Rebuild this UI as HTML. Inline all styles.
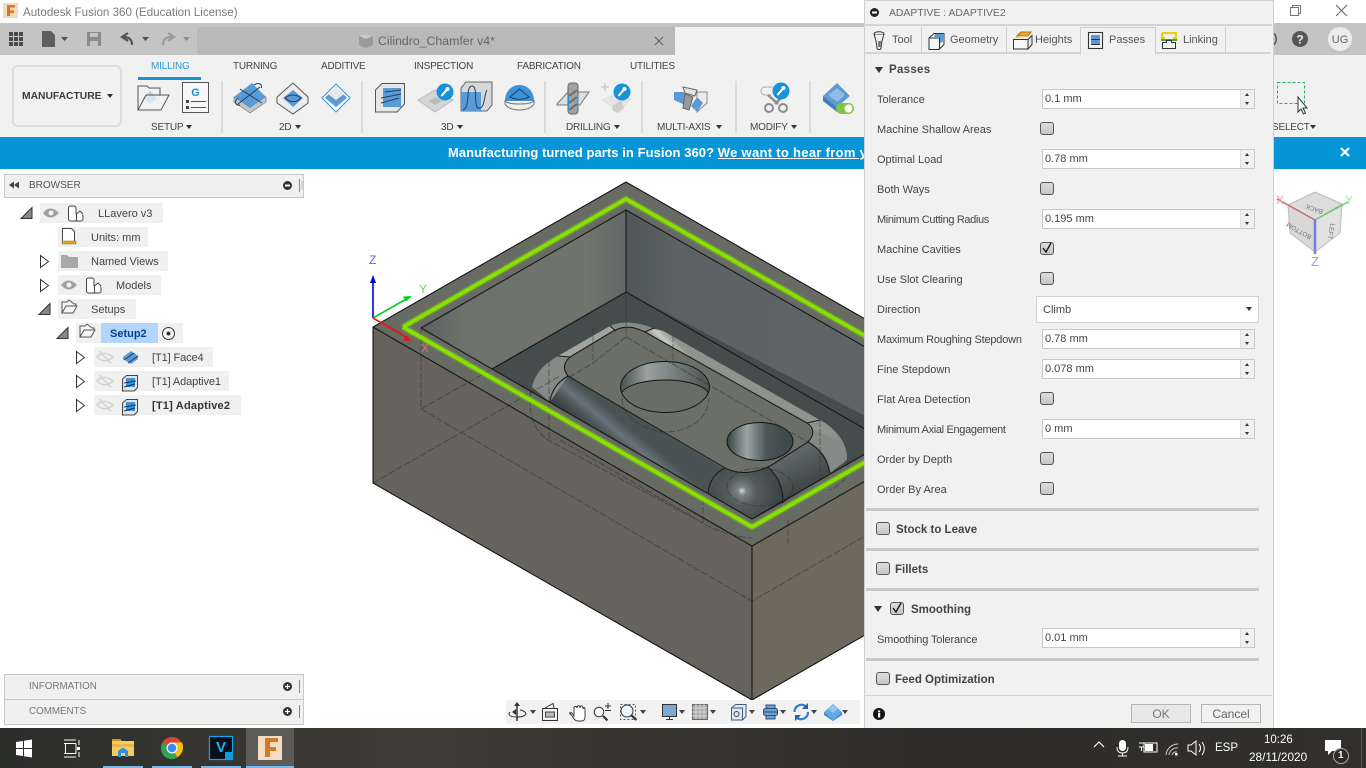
<!DOCTYPE html>
<html><head><meta charset="utf-8"><style>
html,body{margin:0;padding:0;width:1366px;height:768px;overflow:hidden;background:#fff;font-family:"Liberation Sans",sans-serif;color:#444;font-size:11px}
.a{position:absolute}
.t{position:absolute;white-space:nowrap;line-height:14px;height:14px}
.u{font-size:10px;letter-spacing:-.2px}
.r{position:absolute;background:#f0f0f0;height:20px}
.l{position:absolute;left:877px;white-space:nowrap;line-height:14px;color:#444}
.in{position:absolute;left:1042px;width:211px;height:18px;background:#fff;border:1px solid #c9c9c9;line-height:19px;text-indent:2px;color:#444}
.sp{position:absolute;right:0;top:0;width:13px;height:18px;background:#f0f0f0;border-left:1px solid #ddd}
.sp:before{content:"";position:absolute;left:4px;top:3px;border:2.5px solid transparent;border-bottom:3px solid #333;border-top:0}
.sp:after{content:"";position:absolute;left:4px;top:12px;border:2.5px solid transparent;border-top:3px solid #333;border-bottom:0}
.cb{position:absolute;width:12px;height:11px;border:1px solid #555;border-radius:3px;background:linear-gradient(#dcdcdc,#c6c6c6)}
.sec{position:absolute;left:866px;width:393px;height:3px;background:#c8c8c8}
.b{font-weight:bold;color:#444}
.ar{position:absolute;border:3px solid transparent;border-top:4px solid #333;border-bottom:0}
svg{position:absolute;overflow:visible}
</style></head><body>

<!-- title bar -->
<svg style="left:2px;top:2px" width="18" height="18"><rect x="1" y="1" width="15" height="15" fill="#f5d9bd"/><path d="M5 3h8v2.500H8v3h4V11H8v3H5z" fill="#d9762b"/></svg>
<div class="t" style="left:23px;top:6px;font-size:11.600px;color:#7a7a7a">Autodesk Fusion 360 (Education License)</div>
<svg style="left:1289px;top:4px" width="14" height="14"><path d="M1.500 3.500h8v8h-8zM3.500 3.500v-2h8v8h-2" fill="none" stroke="#777"/></svg>
<svg style="left:1335px;top:4px" width="14" height="14"><path d="M1 1l11 11M12 1L1 12" stroke="#666" fill="none"/></svg>

<!-- app toolbar -->
<div class="a" style="left:0;top:23px;width:1366px;height:32px;background:#c4c4c4"></div>
<div class="a" style="left:197px;top:27px;width:478px;height:28px;background:#b9b9b9;border-radius:3px 0 0 0"></div>
<div class="a" style="left:675px;top:27px;width:400px;height:28px;background:#f1f1f1"></div>
<svg style="left:0;top:23px" width="230" height="32">
<g fill="#4a4a4a"><path d="M9 9h4v4H9zM14 9h4v4h-4zM19 9h4v4h-4zM9 14h4v4H9zM14 14h4v4h-4zM19 14h4v4h-4zM9 19h4v4H9zM14 19h4v4h-4zM19 19h4v4h-4z"/></g>
<path d="M42 8h9l4 4v12H42z" fill="#5e5e5e"/><path d="M61 14h7l-3.500 4z" fill="#4f4f4f"/>
<path d="M87 9h14v14H87z" fill="#8a8a8a"/><rect x="90" y="10" width="8" height="4" fill="#c4c4c4"/><rect x="90" y="18" width="8" height="5" fill="#c4c4c4"/>
<path d="M132 22c0-6-3-8-9-8M128 10l-6 4 6 4" fill="none" stroke="#555" stroke-width="2.200"/><path d="M142 14h7l-3.500 4z" fill="#4f4f4f"/>
<path d="M163 22c0-6 3-8 9-8M168 10l6 4-6 4" fill="none" stroke="#9b9b9b" stroke-width="2.200"/><path d="M183 14h7l-3.500 4z" fill="#8e8e8e"/>
</svg>
<svg style="left:358px;top:33px" width="16" height="16"><path d="M1 3l7-2 7 2v9l-7 3-7-3z" fill="#9a9a9a"/><path d="M1 3l7 3 7-3-7-2z" fill="#c9c9c9"/></svg>
<div class="t" style="left:378px;top:34px;font-size:12.300px;color:#666">Cilindro_Chamfer v4*</div>
<svg style="left:654px;top:36px" width="12" height="12"><path d="M1 1l8 8M9 1l-8 8" stroke="#666" fill="none" stroke-width="1.200"/></svg>
<svg style="left:1265px;top:27px" width="101" height="26">
<path d="M8.500 6a8 8 0 0 1 0 12" fill="none" stroke="#555" stroke-width="1.500"/>
<circle cx="35" cy="12" r="8" fill="#555"/><text x="35" y="16.500" text-anchor="middle" font-family="Liberation Sans" font-size="12" font-weight="bold" fill="#eee">?</text>
<circle cx="75" cy="12" r="12" fill="#ececec"/><text x="75" y="16" text-anchor="middle" font-family="Liberation Sans" font-size="11" fill="#666">UG</text>
</svg>

<!-- ribbon -->
<div class="a" style="left:0;top:55px;width:1366px;height:82px;background:#f1f1f1"></div>
<div class="a" style="left:12px;top:65px;width:106px;height:58px;border:2px solid #dcdcdc;border-radius:6px"></div>
<div class="t b" style="left:22px;top:90px;font-size:10.300px;color:#3c3c3c">MANUFACTURE</div>
<div class="ar" style="left:107px;top:94px"></div>
<div class="t u" style="left:151px;top:60px;color:#2b9ad8">MILLING</div>
<div class="a" style="left:138px;top:77px;width:63px;height:3px;background:#1a93d6"></div>
<div class="t u" style="left:233px;top:60px">TURNING</div>
<div class="t u" style="left:321px;top:60px">ADDITIVE</div>
<div class="t u" style="left:414px;top:60px">INSPECTION</div>
<div class="t u" style="left:517px;top:60px">FABRICATION</div>
<div class="t u" style="left:630px;top:60px">UTILITIES</div>
<div class="t u" style="left:151px;top:121px">SETUP</div><div class="ar" style="left:186px;top:125px"></div>
<div class="t u" style="left:279px;top:121px">2D</div><div class="ar" style="left:295px;top:125px"></div>
<div class="t u" style="left:441px;top:121px">3D</div><div class="ar" style="left:457px;top:125px"></div>
<div class="t u" style="left:566px;top:121px">DRILLING</div><div class="ar" style="left:614px;top:125px"></div>
<div class="t u" style="left:657px;top:121px">MULTI-AXIS</div><div class="ar" style="left:716px;top:125px"></div>
<div class="t u" style="left:750px;top:121px">MODIFY</div><div class="ar" style="left:791px;top:125px"></div>
<div class="t u" style="left:1272px;top:121px">SELECT</div><div class="ar" style="left:1310px;top:125px"></div>

<svg style="left:0;top:0" width="1366" height="137">
<g fill="#dadada"><rect x="221" y="81" width="2" height="52"/><rect x="361" y="81" width="2" height="52"/><rect x="544" y="81" width="2" height="52"/><rect x="641" y="81" width="2" height="52"/><rect x="735" y="81" width="2" height="52"/><rect x="809" y="81" width="2" height="52"/></g>
<!-- setup -->
<path d="M138 110V86h9l2 2h11v8" fill="none" stroke="#555"/><path d="M143 98l7-7 7 7-7 6z" fill="#b7d6ee"/><path d="M138 110l8-15h23l-8 15z" fill="#f4f4f4" fill-opacity=".5" stroke="#555"/>
<rect x="182.500" y="82.500" width="26" height="30" fill="#f7f7f7" stroke="#555"/><text x="195.500" y="96" text-anchor="middle" font-family="Liberation Sans" font-weight="bold" font-size="11" fill="#1c8fd8">G</text><path d="M186 100h3v3h-3zM186 106h3v3h-3z" fill="#444"/><path d="M191 101.500h15M191 107.500h15" stroke="#555"/>
<!-- 2d -->
<path d="M234 97v5l16 11 16-11v-5z" fill="#c4c4c4" stroke="#777" stroke-width=".7"/><path d="M234 97l18-14 14 14-16 11z" fill="#5b9bd5"/><path d="M238 104l22-17M240 89l22 14M238 98c-4 3-3 8 2 7M254 85c4-3 9-1 7 3" fill="none" stroke="#1d3f63"/>
<path d="M277 97l16-14 15 14v6l-15 11-16-11z" fill="#ececec" stroke="#555"/><path d="M283 98l10-8 10 8-10 9z" fill="#5b9bd5"/><path d="M285 98c5-4 11-4 16 0-5 5-11 5-16 0z" fill="none" stroke="#1d3f63"/>
<path d="M322 98l14-14 14 14-14 14z" fill="#fff" stroke="#2f95e0"/><path d="M325 98l11-11 11 11-11 9z" fill="#5b9bd5"/><path d="M328 94l8-7 8 7-8 6z" fill="#e7e7e7"/>
<!-- 3d -->
<path d="M375.500 90L382 83.500H404.500V104L397 112H375.500z" fill="#e6e6e6" stroke="#555"/><rect x="383" y="88" width="18" height="19" fill="#5b9bd5"/><path d="M381 98l20-4M381 103l18-5M385 92l16-2" stroke="#1d3f63" fill="none"/>
<path d="M418 100l17-10 18 10-18 12z" fill="#d6d6d6" stroke="#bbb"/><path d="M429 101l6-4 7 4-7 4z" fill="#bbb"/><circle cx="445" cy="92" r="8.500" fill="#1a93d6"/><path d="M441.500 96l5-6" stroke="#fff" stroke-width="2"/><circle cx="447.500" cy="89" r="2" fill="#fff"/>
<path d="M461 88l5-6h26v23l-5 6h-26z" fill="#d8d8d8" stroke="#666"/><path d="M461 92h20v19h-20z" fill="#5b9bd5"/><path d="M463 110c8-3 2-24 9-24s0 24 8 22c5-1 4-14 7-18" fill="none" stroke="#1d3f63"/>
<path d="M505 101c0-9 6-16 14.500-16S534 92 534 101z" fill="#3d93d6"/><path d="M505 101c4 4 25 4 29 0v3c-4 8-25 8-29 0z" fill="#efefef" stroke="#777"/><path d="M510 97l9.500-8 9.500 8c-6 3-13 3-19 0z" fill="none" stroke="#1d3f63"/>
<!-- drilling -->
<path d="M557 104l11-12h21l-9 13H557z" fill="#dedede" stroke="#777"/><rect x="568" y="83" width="10" height="31" rx="3" fill="#a2a2a2" stroke="#666"/><path d="M569 96l8-6M569 103l8-6M569 110l8-6" stroke="#6d6d6d" stroke-width="2"/><path d="M568.500 96v11M578 96v11" stroke="#1a93d6"/>
<path d="M601 87h8M605 83v8" stroke="#ccc" stroke-width="1.500"/><path d="M602 100l14-6 15 5-12 11z" fill="#e5e5e5" stroke="#ddd"/><path d="M612 106l9-6 3 8-6 5-5-2z" fill="#cfcfcf"/><circle cx="622" cy="92" r="8.500" fill="#1a93d6"/><path d="M618.500 96l5-6" stroke="#fff" stroke-width="2"/><circle cx="624.500" cy="89" r="2" fill="#fff"/>
<!-- multi-axis -->
<path d="M697 92h10v11l-10 9z" fill="#ececec" stroke="#888"/><path d="M674 92h10l5 15-15-7zM691 106l6-9 6 6-6 9z" fill="#5b9bd5"/><path d="M683 87l14 3-2 6-10-3z" fill="#e2e2e2" stroke="#666"/><path d="M685 94l8 3-4 13-6-2z" fill="#9a9a9a" stroke="#666"/>
<!-- modify -->
<path d="M773 87h-8a4 4 0 0 0 0 8h6" stroke="#aaa" fill="none"/><path d="M768 95l10 9M784 95l-9 9" stroke="#8c8c8c" stroke-width="2.500"/><circle cx="769" cy="108" r="4" fill="none" stroke="#8c8c8c" stroke-width="2"/><circle cx="783" cy="108" r="4" fill="none" stroke="#8c8c8c" stroke-width="2"/><circle cx="781" cy="91" r="8.500" fill="#1a93d6"/><path d="M777.500 95l5-6" stroke="#fff" stroke-width="2"/><circle cx="783.500" cy="88" r="2" fill="#fff"/>
<!-- simulation -->
<path d="M823 96l14-13 13 13-13 11z" fill="#5b9bd5"/><path d="M823 96v5l14 11 6-4v-4l-6 3z" fill="#3d7fbd"/><path d="M828 95l9-7 8 7-8 7z" fill="#8fbde6"/>
<rect x="836" y="103" width="18" height="11" rx="5.500" fill="#84c443"/><circle cx="848.500" cy="108.500" r="4" fill="#fff"/>
<!-- select -->
<rect x="1277.500" y="82.500" width="27" height="21" fill="none" stroke="#27ae60" stroke-dasharray="3 2"/>
<path d="M1298 97v15l3-3 2.500 5 2-1-2.500-5h4z" fill="#fff" stroke="#333"/>
</svg>

<!-- banner -->
<div class="a" style="left:0;top:137px;width:1366px;height:32px;background:#0696d7"></div>
<div class="t b" style="left:448px;top:146px;color:#fff;font-size:13px;letter-spacing:.06px;width:416px;overflow:hidden;height:16px">Manufacturing turned parts in Fusion 360? <u style="letter-spacing:.3px">We want to hear from you</u></div>
<svg style="left:1340px;top:147px" width="12" height="12"><path d="M1 1l8 8M9 1l-8 8" stroke="#fff" stroke-width="2.200" fill="none"/></svg>

<!-- 3D model -->
<svg style="left:0;top:0" width="1366" height="768">
<defs>
<linearGradient id="wl" x1="421" y1="0" x2="626" y2="0" gradientUnits="userSpaceOnUse"><stop offset="0" stop-color="#596160"/><stop offset=".2" stop-color="#6d716b"/><stop offset=".8" stop-color="#71746d"/><stop offset="1" stop-color="#636867"/></linearGradient>
<linearGradient id="wr" x1="626" y1="0" x2="864" y2="0" gradientUnits="userSpaceOnUse"><stop offset="0" stop-color="#4e5758"/><stop offset=".2" stop-color="#5a6264"/><stop offset="1" stop-color="#5d6566"/></linearGradient>
<linearGradient id="bd" x1="570" y1="378" x2="550" y2="402" gradientUnits="userSpaceOnUse"><stop offset="0" stop-color="#4a5354"/><stop offset=".35" stop-color="#66747a"/><stop offset=".65" stop-color="#4a5354"/><stop offset="1" stop-color="#353c3c"/></linearGradient>
<linearGradient id="br" x1="790" y1="452" x2="810" y2="490" gradientUnits="userSpaceOnUse"><stop offset="0" stop-color="#606a6a"/><stop offset=".6" stop-color="#4a5252"/><stop offset="1" stop-color="#3b4241"/></linearGradient>
<linearGradient id="tr" x1="665" y1="328" x2="652" y2="340" gradientUnits="userSpaceOnUse"><stop offset="0" stop-color="#8f938e"/><stop offset=".5" stop-color="#c9ccc4"/><stop offset="1" stop-color="#8a8e87"/></linearGradient>
<linearGradient id="h1" x1="0" y1="0" x2="1" y2="0"><stop offset="0" stop-color="#45514f"/><stop offset=".3" stop-color="#98a2a0"/><stop offset=".55" stop-color="#7b8685"/><stop offset="1" stop-color="#4a5453"/></linearGradient>
<linearGradient id="h2" x1="0" y1="0" x2="1" y2="0"><stop offset="0" stop-color="#38413f"/><stop offset=".3" stop-color="#9aa5a4"/><stop offset=".6" stop-color="#4b5656"/><stop offset="1" stop-color="#3d4646"/></linearGradient>
<radialGradient id="bl" cx="742" cy="491" r="42" gradientUnits="userSpaceOnUse"><stop offset="0" stop-color="#d4dbd9"/><stop offset=".1" stop-color="#7a8484"/><stop offset=".35" stop-color="#535b5b"/><stop offset="1" stop-color="#3a4141"/></radialGradient>
<clipPath id="c"><rect x="300" y="170" width="564" height="540"/></clipPath>
</defs>
<g clip-path="url(#c)">
<path d="M373 327L752 546V700L373 483z" fill="#66635c"/>
<path d="M752 546L900 461V615L752 700z" fill="#6d695d"/>
<path d="M373 327L626 182L900 339V461L752 546z" fill="#686b64"/>
<path d="M421 328L626 210L900 367V434L752 519z" fill="#4a5152"/>
<path d="M421 328L626 210V292L492 369z" fill="url(#wl)"/>
<path d="M626 210L900 367V449L626 292z" fill="url(#wr)"/>
<path d="M626 292L492 369L752 519L900 434z" fill="#454c4c"/>
<!-- part -->
<path d="M532 387Q536 368 558 356L610 326Q626 318 653 328L820 420Q848 436 847 460L830 473L783 503L753 519L708 493L550 402z" fill="#858a86"/>
<path d="M568 376L723 468L708 493L550 402z" fill="url(#bd)"/>
<path d="M808 442L768 467L783 503L830 473Q828 452 808 442z" fill="url(#br)"/>
<path d="M723 468Q745 478 768 467Q783 480 783 503L753 519L708 493z" fill="url(#bl)"/>
<path d="M568 376Q560 366 570 357L610 333Q626 322 645 332L807 423Q818 431 808 442L770 466Q745 478 725 468z" fill="#6c6f67"/>
<path d="M645 332Q655 326 667 333L820 420Q835 428 838 440L810 428L807 423z" fill="url(#tr)"/>
<path d="M558 356L610 326L616 329L610 333L570 357z" fill="#a2a59f"/>
<!-- holes -->
<ellipse cx="665" cy="387" rx="44.500" ry="25.500" fill="url(#h1)"/>
<path d="M622 392C635 376 695 376 708 392C703 405 690 412.500 665 412.500C640 412.500 627 405 622 392z" fill="#6a6d66"/>
<ellipse cx="665" cy="387" rx="44.500" ry="25.500" fill="none" stroke="#141616"/>
<path d="M622 392C635 376 695 376 708 392" fill="none" stroke="#141616"/>
<ellipse cx="760" cy="441.500" rx="33" ry="19" fill="url(#h2)" stroke="#141616"/>
<g fill="none" stroke="#1a1c1c" stroke-width="1.100">
<path d="M568 376Q560 366 570 357L610 333Q626 322 645 332L807 423Q818 431 808 442L770 466Q745 478 725 468z"/>
<path d="M568 376Q552 385 550 402M725 468Q710 475 708 493M768 467Q783 480 783 503M808 442Q826 452 830 473M558 356L570 357M610 326L616 331M645 332L654 328M807 423L820 420"/>
</g>
<!-- ghost hidden lines -->
<g fill="none" stroke="#2c2c2a" stroke-opacity=".5" stroke-dasharray="7 2">
<path d="M421 328V409L752 601L900 516M421 409L492 369M373 483L560 376M752 546V601"/>
<path d="M626 292V337L593 363L568 378M626 337L813 445M560 440L703 523M531 390Q526 425 548 440L703 523Q722 535 752 538"/>
<path d="M622 398C622 420 650 432 665 432C688 432 708 420 709 398M788 520V544M703 523V497M847 460Q852 480 830 490M820 420V475M549 360V440M593 327V360M673 335V365"/>
<ellipse cx="760" cy="487" rx="33" ry="19"/>
</g>
<!-- rim lines + green -->
<path d="M403 327L626 199L900 356M403 327L752 527L900 442" fill="none" stroke="#8ce000" stroke-opacity=".28" stroke-width="7"/>
<path d="M403 327L626 199L900 356M403 327L752 527L900 442" fill="none" stroke="#86e000" stroke-width="4"/>
<g fill="none" stroke="#141616" stroke-width="1.100">
<path d="M421 328L626 210L900 367M421 328L752 519L900 434M626 210V292M492 369L626 292L900 449"/>
<path d="M373 327L626 182L900 339M373 327L752 546L900 461M373 327V483L752 700L900 615M752 546V700"/>
</g>
</g>
<!-- triad -->
<path d="M373 318V278" stroke="#0000e0" stroke-width="1.600"/><path d="M373 275l-3 8h6z" fill="#0000e0"/>
<path d="M373 318L408 298" stroke="#00d020" stroke-width="1.600"/><path d="M412 296l-9 .5 3 5z" fill="#00d020"/>
<path d="M373 318L408 338" stroke="#ee1010" stroke-width="1.600"/><path d="M412 341l-9-.5 3-5z" fill="#ee1010"/>
<text x="369" y="264" font-family="Liberation Sans" font-size="12" fill="#6060ee">Z</text>
<text x="419" y="293" font-family="Liberation Sans" font-size="12" fill="#55dd55">Y</text>
<text x="421" y="352" font-family="Liberation Sans" font-size="12" fill="#e07070">X</text>
<!-- viewcube -->
<path d="M1288 205l27-13 27 12-27 16z" fill="#dcdcdc" stroke="#bbb"/><path d="M1288 205l27 15v32l-25-19z" fill="#d8d8d8" stroke="#bbb"/><path d="M1315 220l27-16-2 29-25 19z" fill="#e2e2e2" stroke="#bbb"/>
<path d="M1277 199l38 21" stroke="#c66" stroke-width="1.300"/><path d="M1315 220l33-18" stroke="#6c6" stroke-width="1.300"/><path d="M1315 220v34" stroke="#7a7ae0" stroke-width="2.500"/>
<text x="1276" y="204" font-family="Liberation Sans" font-size="12" fill="#f29b9b">X</text><text x="1345" y="204" font-family="Liberation Sans" font-size="12" fill="#9be89b">Y</text><text x="1311" y="266" font-family="Liberation Sans" font-size="13" fill="#9d9df0">Z</text>
<text x="1315" y="207" text-anchor="middle" font-family="Liberation Sans" font-size="6.500" fill="#777" transform="rotate(200 1315 207)">BACK</text>
<text x="1300" y="229" text-anchor="middle" font-family="Liberation Sans" font-size="6.500" fill="#777" transform="rotate(210 1300 229)">BOTTOM</text>
<text x="1329" y="231" text-anchor="middle" font-family="Liberation Sans" font-size="6.500" fill="#777" transform="rotate(100 1329 231)">LEFT</text>
</svg>

<!-- browser -->
<div class="a" style="left:4px;top:174px;width:298px;height:22px;background:#f0f0f0;border:1px solid #c9c9c9"></div>
<div class="t" style="left:29px;top:179px;font-size:10px;color:#555">BROWSER</div>
<div class="r" style="left:40px;top:203px;width:123px"></div>
<div class="r" style="left:58px;top:227px;width:90px"></div>
<div class="r" style="left:58px;top:251px;width:110px"></div>
<div class="r" style="left:58px;top:275px;width:103px"></div>
<div class="r" style="left:58px;top:299px;width:78px"></div>
<div class="r" style="left:76px;top:323px;width:107px"></div>
<div class="a" style="left:101px;top:323px;width:57px;height:20px;background:#b2d5fb"></div>
<div class="r" style="left:94px;top:347px;width:119px"></div>
<div class="r" style="left:94px;top:371px;width:135px"></div>
<div class="r" style="left:94px;top:395px;width:147px"></div>
<div class="t" style="left:98px;top:207px">LLavero v3</div>
<div class="t" style="left:91px;top:231px">Units: mm</div>
<div class="t" style="left:91px;top:255px">Named Views</div>
<div class="t" style="left:116px;top:279px">Models</div>
<div class="t" style="left:91px;top:303px">Setups</div>
<div class="t b" style="left:110px;top:327px;color:#0a3f8f">Setup2</div>
<div class="t" style="left:152px;top:351px;letter-spacing:-.1px">[T1] Face4</div>
<div class="t" style="left:152px;top:375px;letter-spacing:-.1px">[T1] Adaptive1</div>
<div class="t b" style="left:152px;top:399px;color:#333;letter-spacing:.2px">[T1] Adaptive2</div>
<div class="a" style="left:4px;top:674px;width:298px;height:24px;background:#f0f0f0;border:1px solid #c9c9c9"></div>
<div class="a" style="left:4px;top:699px;width:298px;height:24px;background:#f0f0f0;border:1px solid #c9c9c9"></div>
<div class="t" style="left:29px;top:680px;font-size:9.800px;color:#777">INFORMATION</div>
<div class="t" style="left:29px;top:705px;font-size:9.800px;color:#777">COMMENTS</div>
<svg style="left:0;top:170px" width="310" height="560">
<path d="M9 15l5-3.500v7zM14 15l5-3.500v7z" fill="#444"/>
<circle cx="287.500" cy="15.500" r="4.500" fill="#333"/><rect x="285" y="14.500" width="5" height="2" fill="#fff"/>
<path d="M299.500 9v13" stroke="#888"/><path d="M302 11v9" stroke="#bbb"/>
<circle cx="287.500" cy="516.500" r="4.500" fill="#333"/><path d="M285 516.500h5M287.500 514v5" stroke="#fff" stroke-width="1.200"/><path d="M299.500 510v13" stroke="#888"/>
<circle cx="287.500" cy="541.500" r="4.500" fill="#333"/><path d="M285 541.500h5M287.500 539v5" stroke="#fff" stroke-width="1.200"/><path d="M299.500 535v13" stroke="#888"/>
<!-- expanders -->
<g fill="#fff" stroke="#333">
<path d="M32 48.500v-11l-11 11z" fill="#888"/>
<path d="M50 144.500v-11l-11 11z" fill="#888"/>
<path d="M68 168.500v-11l-11 11z" fill="#888"/>
<path d="M40.500 85.500l8 6-8 6z"/><path d="M40.500 109.500l8 6-8 6z"/>
<path d="M76.500 181.500l8 6-8 6z"/><path d="M76.500 205.500l8 6-8 6z"/><path d="M76.500 229.500l8 6-8 6z"/>
</g>
<!-- eyes -->
<path d="M43 43c5-6 10-6 16 0-6 6-11 6-16 0z" fill="#a0a0a0"/><circle cx="51" cy="43" r="2.500" fill="#f0f0f0"/>
<path d="M61 115c5-6 10-6 16 0-6 6-11 6-16 0z" fill="#a0a0a0"/><circle cx="69" cy="115" r="2.500" fill="#f0f0f0"/>
<g fill="none" stroke="#d2d2d2" stroke-width="1.500"><path d="M97 187c5-5 10-5 16 0-6 5-11 5-16 0zM99 181l12 12"/><path d="M97 211c5-5 10-5 16 0-6 5-11 5-16 0zM99 205l12 12"/><path d="M97 235c5-5 10-5 16 0-6 5-11 5-16 0zM99 229l12 12"/></g>
<!-- model icons -->
<g fill="#fff" stroke="#444"><path d="M68.500 38a2 2 0 0 1 2-2H74a2 2 0 0 1 2 2V44h5a2 2 0 0 1 2 2V49a2 2 0 0 1-2 2H70.500a2 2 0 0 1-2-2z"/><path d="M76.500 51V44L80 41l3 3"/><path d="M86.500 110a2 2 0 0 1 2-2H92a2 2 0 0 1 2 2V116h5a2 2 0 0 1 2 2V121a2 2 0 0 1-2 2H88.500a2 2 0 0 1-2-2z"/><path d="M94.500 123V116L98 113l3 3"/></g>
<!-- units -->
<path d="M62.500 58.500h9l3 3v10h-12z" fill="#fff" stroke="#444"/><rect x="62" y="71" width="14" height="3" fill="#e7a81e" stroke="#8f6a10" stroke-width=".5"/>
<path d="M61 85h6l2 2h9v11H61z" fill="#a8a8a8"/>
<!-- folders -->
<g fill="#f7f7f7" stroke="#555"><path d="M62 143v-11h5l2-2 5 4h2v3"/><path d="M62 143l4-7h11l-4 7z"/><path d="M80 167v-11h5l2-2 5 4h2v3"/><path d="M80 167l4-7h11l-4 7z"/></g>
<circle cx="168.500" cy="163.500" r="6" fill="#f7f7f7" stroke="#333"/><circle cx="168.500" cy="163.500" r="2" fill="#333"/>
<!-- op icons -->
<path d="M123 187l8-6 7 5v3l-7 5-8-5z" fill="#5b9bd5"/><path d="M124 190l10-7M128 193l10-7" stroke="#1d3f63" fill="none"/>
<g fill="#e5e5e5" stroke="#444"><path d="M122.500 209l4-3.500h11v12l-3.500 3.500h-11.500z"/><path d="M122.500 233l4-3.500h11v12l-3.500 3.500h-11.500z"/></g>
<path d="M126 208h9v9h-9zM126 232h9v9h-9z" fill="#3d93d6"/><path d="M124 213l12-2M124 217l11-3M124 237l12-2M124 241l11-3" stroke="#16355a" fill="none"/>
</svg>

<!-- nav bar -->
<div class="a" style="left:506px;top:700px;width:354px;height:24px;background:#f2f2f2"></div>
<svg style="left:506px;top:700px" width="354" height="24">
<!-- orbit -->
<path d="M11 3v18" stroke="#333" stroke-width="1.500"/><path d="M11 2l-3 4h6zM6 12l4-3v6z" fill="#333"/><path d="M4 12c-3 3 1 5 7 5s11-2 8-5c-1-1-3-1.500-5-2" fill="none" stroke="#333"/>
<!-- screen pan -->
<path d="M36.500 8.500h15v12h-15z" fill="#f4f4f4" stroke="#333"/><rect x="39.500" y="12" width="9" height="5" fill="#bbb" stroke="#444"/><path d="M39 8l8-4.500 1 4.500" fill="none" stroke="#333"/>
<!-- hand -->
<path d="M64 13l3 4c1 2 2 4 5 4h4c2 0 3-2 3-4V9c0-2-2-2-2 0 0-4-3-4-3-1 0-3-3-3-3 0 0-2-3-2-3 0v8l-2-3c-1-1-3 0-2 1z" fill="#fff" stroke="#333" stroke-width=".9"/>
<!-- zoom -->
<circle cx="93" cy="12" r="4.800" fill="#f8f8f8" stroke="#333"/><path d="M97 16l4.500 4.500" stroke="#333" stroke-width="2.200"/><path d="M102 3v6M99 6h6M99 10.500h6" stroke="#333"/>
<!-- fit -->
<rect x="114.500" y="4.500" width="15" height="15" fill="none" stroke="#555" stroke-dasharray="2 2"/><circle cx="121" cy="11" r="6" fill="#eef6fb" stroke="#333"/><path d="M125 15l5.500 5" stroke="#333" stroke-width="2.200"/>
<!-- monitor -->
<rect x="156.500" y="4.500" width="14" height="12" fill="#7da8d6" stroke="#333"/><path d="M160 19.500h7M163.500 17v2" stroke="#333"/>
<!-- grid -->
<rect x="186.500" y="4.500" width="15" height="15" fill="#a8a8a8" stroke="#666"/><path d="M190 4v15M194 4v15M198 4v15M186 8h15M186 12h15M186 16h15" stroke="#e7e7e7" stroke-width=".7"/>
<!-- cube -->
<path d="M225.500 8l4-3.500h10.500v12l-3.500 3.500h-11z" fill="#e8e8e8" stroke="#3f5f82"/><rect x="225.500" y="8" width="11" height="12" fill="#dfe8f2" stroke="#3f5f82"/><circle cx="230.500" cy="14" r="2.500" fill="none" stroke="#444"/>
<!-- layers -->
<path d="M260 5h9v14h-9z" fill="#6e9fd2" stroke="#2c4e77"/><rect x="257.500" y="8.500" width="14" height="7" rx="2" fill="#6e9fd2" stroke="#2c4e77"/><path d="M258 12h13" stroke="#2c4e77"/>
<!-- refresh -->
<path d="M288.500 12a7 7 0 0 1 11.500-5.500M302 12a7 7 0 0 1-11.500 5.500" fill="none" stroke="#2f7fd6" stroke-width="2.200"/><path d="M302 3v6h-6zM289 21v-6h6z" fill="#2f5f9b"/>
<!-- diamond -->
<path d="M318 12l9-8 9 8-9 8z" fill="#62a8e6"/><path d="M318 12v3l9 6 9-6v-3l-9 8z" fill="#3f88cf"/><path d="M322 9l5-4 5 4-5 4z" fill="#93c6f0"/>
<!-- drop arrows -->
<path d="M24 10h6l-3 4zM134 10h6l-3 4zM173 10h6l-3 4zM204 10h6l-3 4zM243 10h6l-3 4zM274 10h6l-3 4zM305 10h6l-3 4zM336 10h6l-3 4z" fill="#444"/>
</svg>

<!-- panel -->
<div class="a" style="left:864px;top:0;width:408px;height:728px;background:#f1f1f1;border-left:1px solid #cfcfcf;border-right:1px solid #cfcfcf"></div>
<div class="a" style="left:864px;top:0;width:410px;height:1px;background:#cfcfcf"></div>
<div class="a" style="left:864px;top:24px;width:408px;height:2px;background:#d4d4d4"></div>
<svg style="left:869px;top:7px" width="12" height="12"><circle cx="5.500" cy="5.500" r="4.500" fill="#222"/><rect x="3" y="4.500" width="5" height="2" fill="#fff"/></svg>
<div class="t" style="left:889px;top:7px;font-size:10.400px;color:#666">ADAPTIVE : ADAPTIVE2</div>
<div class="a" style="left:865px;top:52px;width:406px;height:2px;background:#d4d4d4"></div>
<div class="a" style="left:1080px;top:27px;width:74px;height:27px;background:#f1f1f1;border:1px solid #cfcfcf;border-bottom:0"></div>
<div class="a" style="left:921px;top:27px;width:1px;height:25px;background:#cfcfcf"></div>
<div class="a" style="left:1006px;top:27px;width:1px;height:25px;background:#cfcfcf"></div>
<div class="a" style="left:1225px;top:27px;width:1px;height:25px;background:#cfcfcf"></div>
<div class="t" style="left:892px;top:33px;color:#555">Tool</div>
<div class="t" style="left:950px;top:33px;color:#555">Geometry</div>
<div class="t" style="left:1035px;top:33px;color:#555">Heights</div>
<div class="t" style="left:1109px;top:33px;color:#555">Passes</div>
<div class="t" style="left:1183px;top:33px;color:#555">Linking</div>
<svg style="left:864px;top:26px" width="370" height="28">
<path d="M10 8h10l-2 7-1 7c0 2-4 2-4 0l-1-7z" fill="#f2f2f2" stroke="#333"/><path d="M14 15h3l-.5 6h-2.500z" fill="#777"/><path d="M10 8c0-3 10-3 10 0" fill="#e8e8e8" stroke="#333"/>
<path d="M65 12l5-4.500h10v11l-5 5H65z" fill="#f4f4f4" stroke="#333"/><path d="M71 8h9v7l-5 3v-7h-5z" fill="#5b9bd5"/><path d="M65.500 12h10v11" fill="none" stroke="#333"/>
<path d="M153 10l4-4h10l-3 4z" fill="#f0a830" stroke="#a86f10"/><path d="M149.500 13.500h14.500v9.500h-14.500z" fill="#f8f8f8" stroke="#333"/><path d="M164 13.500l4-4v9l-4 4.500z" fill="#e6e6e6" stroke="#333"/><path d="M150 13l4-3h10l3-1" fill="#f5c06a"/>
<rect x="224.500" y="6.500" width="14" height="16" fill="#f4f4f4" stroke="#333" stroke-width="1.100"/><rect x="227" y="9" width="9" height="4" fill="#5b9bd5"/><rect x="227" y="14" width="9" height="4" fill="#5b9bd5"/><path d="M227 13.500h9M227 18.500h9" stroke="#333"/>
<path d="M298 7h14v5h-3M298 7v5h3" fill="none" stroke="#e8d400" stroke-width="2"/><rect x="297" y="13" width="16" height="2" fill="#38a838"/><path d="M298.500 22.500v-6h4v-2h5v2h4v6z" fill="#f6f6f6" stroke="#333"/>
</svg>

<!-- section: passes -->
<div class="a" style="left:875px;top:67px;border:4px solid transparent;border-top:6px solid #333;border-bottom:0"></div>
<div class="t b" style="left:889px;top:63px;font-size:11.500px;letter-spacing:.3px">Passes</div>
<div class="l" style="top:93px">Tolerance</div><div class="in" style="top:89px">0.1 mm<span class="sp"></span></div>
<div class="l" style="top:123px">Machine Shallow Areas</div><div class="cb" style="left:1040px;top:122px"></div>
<div class="l" style="top:153px">Optimal Load</div><div class="in" style="top:149px">0.78 mm<span class="sp"></span></div>
<div class="l" style="top:183px">Both Ways</div><div class="cb" style="left:1040px;top:182px"></div>
<div class="l" style="top:213px;letter-spacing:-.36px">Minimum Cutting Radius</div><div class="in" style="top:209px">0.195 mm<span class="sp"></span></div>
<div class="l" style="top:243px">Machine Cavities</div><div class="cb" style="left:1040px;top:242px"></div>
<div class="l" style="top:273px">Use Slot Clearing</div><div class="cb" style="left:1040px;top:272px"></div>
<div class="l" style="top:303px">Direction</div>
<div class="a" style="left:1036px;top:296px;width:221px;height:25px;background:#fff;border:1px solid #d2d2d2;line-height:26px;text-indent:6px;color:#444">Climb</div>
<div class="ar" style="left:1246px;top:307px"></div>
<div class="l" style="top:333px;letter-spacing:-.2px">Maximum Roughing Stepdown</div><div class="in" style="top:329px">0.78 mm<span class="sp"></span></div>
<div class="l" style="top:363px">Fine Stepdown</div><div class="in" style="top:359px">0.078 mm<span class="sp"></span></div>
<div class="l" style="top:393px">Flat Area Detection</div><div class="cb" style="left:1040px;top:392px"></div>
<div class="l" style="top:423px;letter-spacing:-.32px">Minimum Axial Engagement</div><div class="in" style="top:419px">0 mm<span class="sp"></span></div>
<div class="l" style="top:453px">Order by Depth</div><div class="cb" style="left:1040px;top:452px"></div>
<div class="l" style="top:483px">Order By Area</div><div class="cb" style="left:1040px;top:482px"></div>

<div class="sec" style="top:508px"></div>
<div class="cb" style="left:876px;top:522px"></div><div class="t b" style="left:896px;top:523px;font-size:11.500px">Stock to Leave</div>
<div class="sec" style="top:548px"></div>
<div class="cb" style="left:876px;top:562px"></div><div class="t b" style="left:895px;top:563px;font-size:11.500px">Fillets</div>
<div class="sec" style="top:588px"></div>
<div class="a" style="left:874px;top:606px;border:4.500px solid transparent;border-top:6px solid #333;border-bottom:0"></div>
<div class="cb" style="left:890px;top:602px"></div><div class="t b" style="left:911px;top:603px;font-size:11.500px">Smoothing</div>
<div class="l" style="top:633px;letter-spacing:-.15px">Smoothing Tolerance</div><div class="in" style="top:628px">0.01 mm<span class="sp"></span></div>
<div class="sec" style="top:658px"></div>
<div class="cb" style="left:876px;top:672px"></div><div class="t b" style="left:895px;top:673px;font-size:11.500px">Feed Optimization</div>
<div class="a" style="left:865px;top:695px;width:407px;height:1px;background:#d0d0d0"></div>
<svg style="left:1039px;top:120px" width="20" height="140"><path d="M4 128l3 4 5-9" fill="none" stroke="#111" stroke-width="1.300"/></svg>
<svg style="left:889px;top:600px" width="16" height="16"><path d="M4 8l3 4 5-9" fill="none" stroke="#111" stroke-width="1.300"/></svg>
<svg style="left:873px;top:708px" width="13" height="13"><circle cx="6" cy="6" r="6" fill="#111"/><rect x="5" y="5" width="2.200" height="4.500" fill="#fff"/><rect x="5" y="2.500" width="2.200" height="1.800" fill="#fff"/></svg>
<div class="a" style="left:1131px;top:704px;width:58px;height:17px;background:#e8e8e8;border:1px solid #b5b5b5;text-align:center;line-height:18px;font-size:12px;color:#777">OK</div>
<div class="a" style="left:1201px;top:704px;width:58px;height:17px;background:#f1f1f1;border:1px solid #b5b5b5;text-align:center;line-height:18px;font-size:12px;color:#666">Cancel</div>

<!-- taskbar -->
<div class="a" style="left:0;top:728px;width:1366px;height:40px;background:linear-gradient(90deg,#2c2e2b,#3f3b36 30%,#2e2c2a 70%,#32302d)"></div>
<div class="a" style="left:246px;top:728px;width:48px;height:40px;background:#5e5c59"></div>
<div class="a" style="left:103px;top:766px;width:40px;height:2px;background:#76b9ed"></div>
<div class="a" style="left:152px;top:766px;width:40px;height:2px;background:#76b9ed"></div>
<div class="a" style="left:201px;top:766px;width:40px;height:2px;background:#76b9ed"></div>
<div class="a" style="left:246px;top:766px;width:48px;height:2px;background:#76b9ed"></div>
<svg style="left:0;top:728px" width="300" height="40">
<path d="M16 14l7-1v7h-7zM24 12.800l8-1.300v8.500h-8zM16 21h7v7l-7-1zM24 21h8v8.500l-8-1.300z" fill="#fff"/>
<path d="M64 15.500h12M64 25.500h12M65.500 15.500v10M76 15.500v10M64 12h12M64 29h12M79 12v5M79 24v5" stroke="#fff" fill="none"/><rect x="77" y="19" width="3" height="3" fill="#fff"/>
<path d="M112 11h8l2 2h12v15h-22z" fill="#f5cd5e"/><path d="M112 11h8l2 2h-10z" fill="#d3941c"/><rect x="112" y="16" width="22" height="3" fill="#e6b84a"/><path d="M118 29v-6l4-3h2l4 3v6h-3v-4h-4v4z" fill="#2f8fe0"/>
<circle cx="172" cy="20" r="11" fill="#db4437"/><path d="M172 20l-9.500-5.500A11 11 0 0 0 167 30z" fill="#2fa34f"/><path d="M172 20l5 9a11 11 0 0 0 5-14.500h-10z" fill="#f4c20d"/><path d="M172 20L167 30A11 11 0 0 0 177.500 29.500z" fill="#2fa34f"/><circle cx="172" cy="20" r="5.500" fill="#fff"/><circle cx="172" cy="20" r="4.300" fill="#4285f4"/>
<rect x="209.500" y="8.500" width="23" height="23" fill="#07101a" stroke="#10a5ee" stroke-width="1.200"/><rect x="225" y="24" width="8" height="8" fill="#0e9ae5"/>
<path d="M258 8h24v24h-24z" fill="#f6dcc2"/><path d="M265 10h13v4h-8v5h6v4h-6v6h-5z" fill="#d07a2c"/>
</svg>
<div class="t b" style="left:216px;top:739px;font-size:15px;color:#1fb0f5;height:18px;line-height:18px">V</div>
<svg style="left:1090px;top:735px" width="276" height="28">
<path d="M4 12l5-5 5 5" fill="none" stroke="#fff" stroke-width="1.200"/>
<rect x="29" y="5" width="7" height="11" rx="3.500" fill="#fff"/><path d="M27 12c0 4 2 6 5.500 6s5.500-2 5.500-6M32.500 18v2.500M28 21h9" stroke="#fff" fill="none"/>
<rect x="54" y="8" width="13" height="9" fill="none" stroke="#fff"/><rect x="55" y="9" width="8" height="7" fill="#fff"/><path d="M67 11v3" stroke="#fff"/><path d="M49 8h5M49 12h5M51.500 12v4" stroke="#fff"/>
<path d="M76 20a12 12 0 0 1 12-11M79 20a8 8 0 0 1 9-7M82 20a4 4 0 0 1 5-3" fill="none" stroke="#ccc"/><rect x="85" y="18" width="2.500" height="2.500" fill="#fff"/>
<path d="M98 10h3l5-4v14l-5-4h-3z" fill="none" stroke="#fff"/><path d="M109 9c2 2 2 6 0 8M112 7c3 4 3 9 0 13" fill="none" stroke="#fff"/>
<path d="M235 5h16v11h-9l-4 4v-4h-3z" fill="#fff"/>
<circle cx="251" cy="21" r="7.500" fill="#2c2b29" stroke="#aaa"/>
</svg>
<div class="t" style="left:1215px;top:741px;color:#fff;font-size:11.500px">ESP</div>
<div class="t" style="left:1264px;top:733px;color:#fff;font-size:11.500px">10:26</div>
<div class="t" style="left:1249px;top:750px;color:#fff;font-size:11.800px">28/11/2020</div>
<div class="t" style="left:1338px;top:749px;color:#fff;font-size:10px;font-weight:bold">1</div>
<div class="a" style="left:1361px;top:728px;width:1px;height:40px;background:#555"></div>
</body></html>
